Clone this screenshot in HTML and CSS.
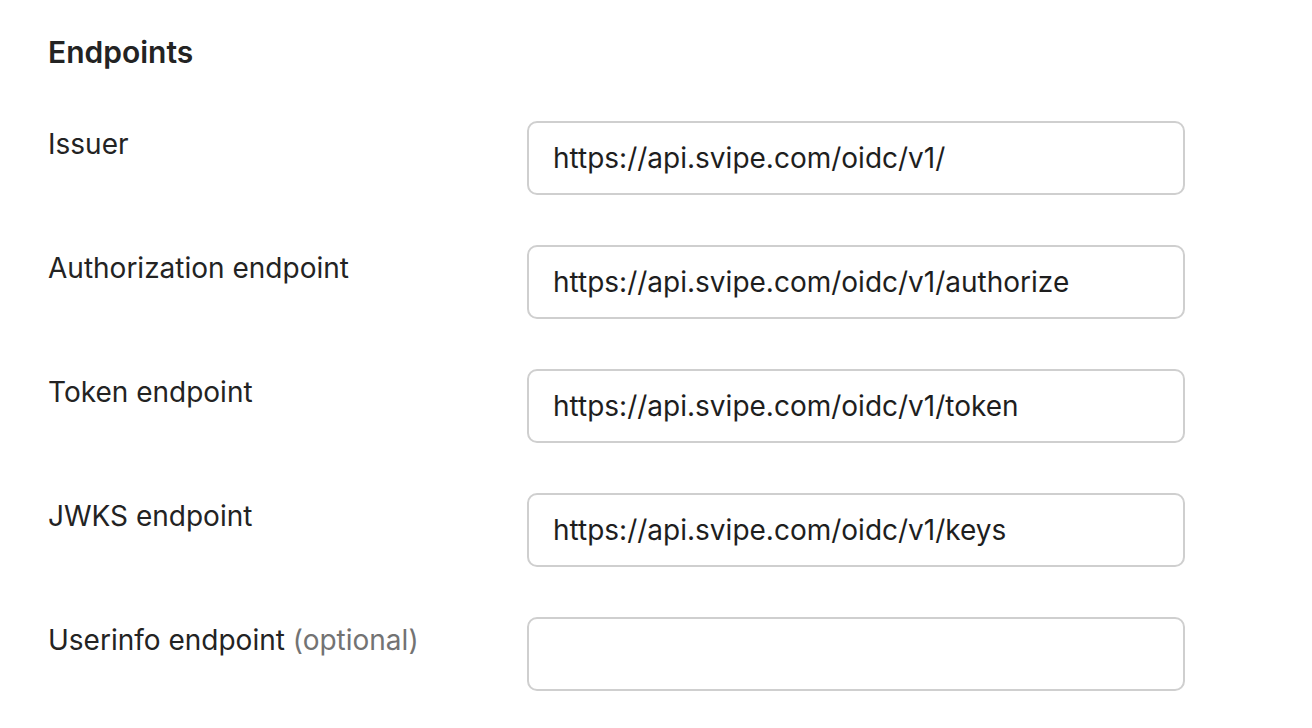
FILE: index.html
```html
<!DOCTYPE html>
<html lang="en">
<head>
<meta charset="utf-8">
<link rel="stylesheet" href="styles.css">
</head>
<body>
<section class="panel">
  <h2 class="title">Endpoints</h2>
  <div class="fields">
    <label class="label">Issuer</label>
    <div class="input">https://api.svipe.com/oidc/v1/</div>
    <label class="label">Authorization endpoint</label>
    <div class="input">https://api.svipe.com/oidc/v1/authorize</div>
    <label class="label">Token endpoint</label>
    <div class="input">https://api.svipe.com/oidc/v1/token</div>
    <label class="label">JWKS endpoint</label>
    <div class="input">https://api.svipe.com/oidc/v1/keys</div>
    <label class="label">Userinfo endpoint <span class="muted">(optional)</span></label>
    <div class="input"></div>
  </div>
</section>
</body>
</html>
```
FILE: styles.css
```css
html, body {
  margin: 0;
  background: #fff;
}
body {
  font-family: Inter, "Noto Sans", sans-serif;
  color: #232323;
}
.panel {
  padding: 34px 0 0 48px;
}
.title {
  margin: 0;
  font-size: 30px;
  font-weight: 600;
  line-height: 36px;
}
.fields {
  margin-top: 51px;
  display: grid;
  grid-template-columns: 479px 658px;
  row-gap: 50px;
  align-items: start;
}
.label {
  font-size: 28px;
  line-height: 36px;
  padding-top: 5px;
}
.muted {
  color: #737373;
}
.input {
  box-sizing: border-box;
  height: 74px;
  border: 2px solid #cfcfcf;
  border-radius: 10px;
  padding: 0 24px;
  font-size: 28px;
  line-height: 70px;
  color: #1e1e1e;
}
```
